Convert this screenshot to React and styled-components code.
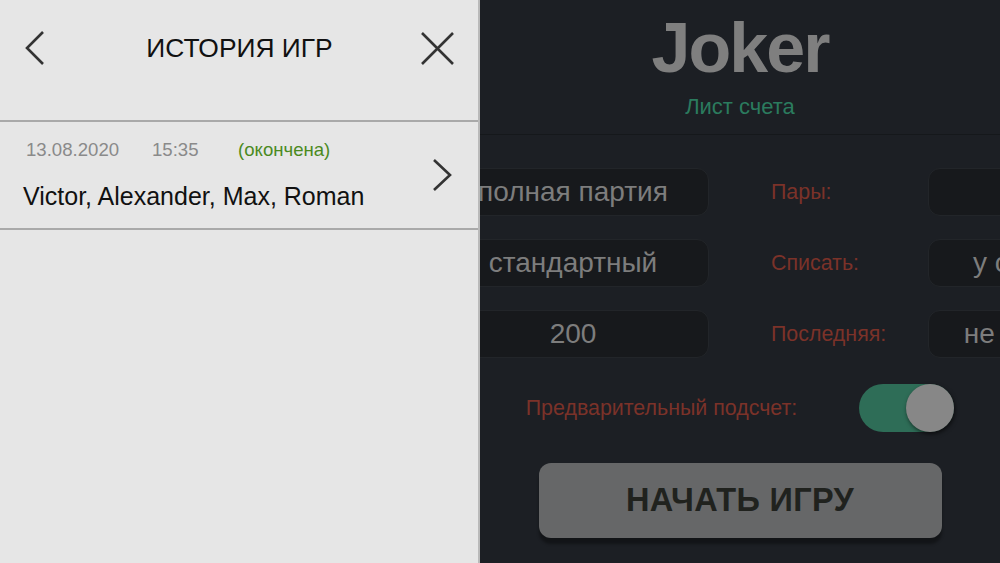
import React from 'react';
import styled, { createGlobalStyle } from 'styled-components';

const GlobalStyle = createGlobalStyle`
  html, body {
    margin: 0;
    padding: 0;
    background: #1c1f24;
  }
  * {
    box-sizing: border-box;
  }
`;

const Screen = styled.div`
  position: relative;
  width: 1000px;
  height: 563px;
  overflow: hidden;
  display: flex;
  background: #1c1f24;
  font-family: "Liberation Sans", Arial, sans-serif;
`;

// main page, pushed right by the drawer
const MainPage = styled.div`
  flex-shrink: 0;
  width: 1000px;
  margin-left: 240px;
  display: flex;
  flex-direction: column;
  align-items: center;
`;

const Header = styled.header`
  width: 100%;
  padding: 13px 0 14px;
  border-bottom: 1px solid #15181b;
  display: flex;
  flex-direction: column;
  align-items: center;
`;

const Logo = styled.h1`
  margin: 0;
  font-size: 70px;
  line-height: 70px;
  font-weight: 700;
  letter-spacing: -2px;
  color: #7f7f7f;
`;

const Subtitle = styled.div`
  margin-top: 11px;
  font-size: 22px;
  line-height: 26px;
  color: #2b7b5e;
`;

const Form = styled.div`
  width: 100%;
  padding: 33px 40px 0;
  display: grid;
  grid-template-columns: 429px 429px;
  column-gap: 62px;
  row-gap: 23px;
`;

const Field = styled.div`
  display: grid;
  grid-template-columns: 157px 272px;
  align-items: center;
`;

const Label = styled.span`
  font-size: 21.4px;
  color: #7b3229;
  white-space: nowrap;
`;

const ValueBox = styled.div`
  height: 48px;
  border-radius: 12px;
  background: #17191c;
  border: 1px solid #222529;
  display: flex;
  align-items: center;
  justify-content: center;
  font-size: 28px;
  color: #7d7d7d;
  white-space: nowrap;
  overflow: hidden;
`;

const ToggleRow = styled.div`
  margin-top: 26px;
  display: flex;
  align-items: center;
  gap: 62px;
`;

const Track = styled.div`
  width: 95px;
  height: 48px;
  border-radius: 24px;
  background: ${(p) => (p.$on ? '#2e6d57' : '#3a3d42')};
  display: flex;
  justify-content: ${(p) => (p.$on ? 'flex-end' : 'flex-start')};
`;

const Knob = styled.div`
  width: 48px;
  height: 48px;
  border-radius: 50%;
  background: #878787;
  box-shadow: 1px 2px 4px rgba(0, 0, 0, 0.6);
`;

const StartButton = styled.button`
  margin-top: 31px;
  width: 403px;
  height: 75px;
  border: none;
  border-radius: 12px;
  background: #666768;
  box-shadow: 0 6px 3px rgba(0, 0, 0, 0.35);
  font-family: "Liberation Sans", Arial, sans-serif;
  font-size: 32.5px;
  font-weight: 700;
  letter-spacing: 0.3px;
  color: #20221e;
`;

const Drawer = styled.aside`
  position: absolute;
  left: 0;
  top: 0;
  width: 480px;
  height: 100%;
  background: #e6e6e6;
  border-right: 2px solid #b9b9b9;
  display: flex;
  flex-direction: column;
`;

const DrawerHeader = styled.div`
  height: 96px;
  margin-bottom: 24px;
  padding: 0 23px 0 24px;
  display: grid;
  grid-template-columns: 1fr auto 1fr;
  align-items: center;
`;

const IconButton = styled.div`
  display: flex;
  justify-self: ${(p) => (p.$end ? 'end' : 'start')};
  color: #333;
`;

const DrawerTitle = styled.div`
  font-size: 26.4px;
  color: #111;
  white-space: nowrap;
`;

const GameRow = styled.div`
  border-top: 2px solid #a9a9a9;
  border-bottom: 2px solid #a9a9a9;
  padding: 17px 26px 17px 23px;
  display: flex;
  align-items: center;
  justify-content: space-between;
`;

const GameInfo = styled.div`
  display: flex;
  flex-direction: column;
  gap: 20px;
`;

const MetaLine = styled.div`
  display: flex;
  font-size: 18.6px;
  line-height: 22px;
  padding-left: 3px;
`;

const Meta = styled.span`
  width: ${(p) => p.$w || 'auto'};
  color: ${(p) => (p.$status ? '#4b8a1e' : '#8a8a8a')};
`;

const Players = styled.div`
  font-size: 25px;
  line-height: 30px;
  color: #111;
`;

const ChevronLeft = () => (
  <svg width="22" height="36" viewBox="0 0 22 36">
    <path d="M19 2 L3 18 L19 34" fill="none" stroke="currentColor" strokeWidth="2.6" />
  </svg>
);

const CloseIcon = () => (
  <svg width="35" height="35" viewBox="0 0 35 35">
    <path d="M2 2 L33 33 M33 2 L2 33" fill="none" stroke="currentColor" strokeWidth="2.6" />
  </svg>
);

const ChevronRight = () => (
  <svg width="20" height="34" viewBox="0 0 20 34">
    <path d="M2 2 L18 17 L2 32" fill="none" stroke="currentColor" strokeWidth="2.6" />
  </svg>
);

// left-column labels sit under the drawer and are not visible
const fields = [
  ['polnaya', 'полная партия', 'Пары:', ''],
  ['standart', 'стандартный', 'Списать:', 'у следующего'],
  ['hisht', '200', 'Последняя:', 'не удваивается'],
];

export default function App() {
  return (
    <>
      <GlobalStyle />
      <Screen>
        <MainPage>
          <Header>
            <Logo>Joker</Logo>
            <Subtitle>Лист счета</Subtitle>
          </Header>
          <Form>
            {fields.map(([key, v1, l2, v2]) => (
              <React.Fragment key={key}>
                <Field>
                  <Label />
                  <ValueBox>{v1}</ValueBox>
                </Field>
                <Field>
                  <Label>{l2}</Label>
                  <ValueBox>{v2}</ValueBox>
                </Field>
              </React.Fragment>
            ))}
          </Form>
          <ToggleRow>
            <Label>Предварительный подсчет:</Label>
            <Track $on>
              <Knob />
            </Track>
          </ToggleRow>
          <StartButton>НАЧАТЬ ИГРУ</StartButton>
        </MainPage>

        <Drawer>
          <DrawerHeader>
            <IconButton>
              <ChevronLeft />
            </IconButton>
            <DrawerTitle>ИСТОРИЯ ИГР</DrawerTitle>
            <IconButton $end>
              <CloseIcon />
            </IconButton>
          </DrawerHeader>
          <GameRow>
            <GameInfo>
              <MetaLine>
                <Meta $w="126px">13.08.2020</Meta>
                <Meta $w="86px">15:35</Meta>
                <Meta $status>(окончена)</Meta>
              </MetaLine>
              <Players>Victor, Alexander, Max, Roman</Players>
            </GameInfo>
            <IconButton>
              <ChevronRight />
            </IconButton>
          </GameRow>
        </Drawer>
      </Screen>
    </>
  );
}
